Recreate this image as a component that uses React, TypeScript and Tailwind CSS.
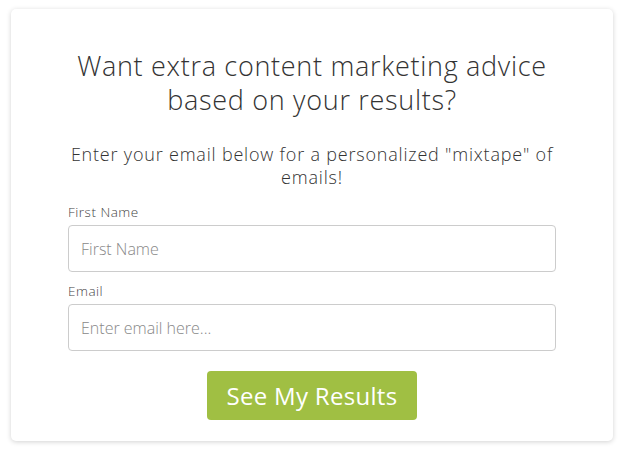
export default function App() {
  return (
    <div className="min-h-[451px] bg-white pt-[9px] px-[11px] pb-[11px] font-['Open_Sans',sans-serif]">
      <div className="rounded-[5px] bg-white shadow-[0_1px_5px_rgba(0,0,0,0.18)] px-[57px] pt-[40px] pb-[21px]">
        <h2 className="text-center text-[27px] leading-[34px] tracking-[0.7px] font-light text-[#333]">
          Want extra content marketing advice
          <br />
          based on your results?
        </h2>
        <p className="mt-[26px] text-center text-[18px] leading-[23px] tracking-[0.8px] font-light text-[#333]">
          Enter your email below for a personalized "mixtape" of emails!
        </p>
        <form className="mt-[14px]" onSubmit={(e) => e.preventDefault()}>
          <label className="block text-[13.5px] leading-[18px] tracking-[0.5px] font-light text-[#444]">First Name</label>
          <input
            type="text"
            placeholder="First Name"
            className="mt-[4px] block w-full h-[47px] rounded-[4px] border border-[#ccc] px-[12px] text-[16px] font-light placeholder:text-[#888] outline-none"
          />
          <label className="mt-[10px] block text-[13.5px] leading-[18px] tracking-[0.5px] font-light text-[#444]">Email</label>
          <input
            type="email"
            placeholder="Enter email here..."
            className="mt-[4px] block w-full h-[47px] rounded-[4px] border border-[#ccc] px-[12px] text-[16px] font-light placeholder:text-[#888] outline-none"
          />
          <div className="mt-[20px] flex justify-center">
            <button
              type="submit"
              className="h-[49px] w-[210px] rounded-[4px] bg-[#a0bf43] text-white text-[24px] tracking-[0.3px] font-normal"
            >
              See My Results
            </button>
          </div>
        </form>
      </div>
    </div>
  );
}
